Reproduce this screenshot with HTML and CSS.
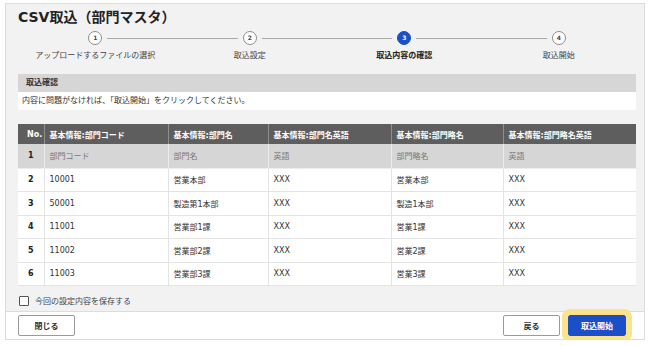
FILE: index.html
```html
<!DOCTYPE html>
<html lang="ja">
<head>
<meta charset="UTF-8" />
<meta name="viewport" content="width=device-width, initial-scale=1" />
<title>CSV取込（部門マスタ）</title>
<link rel="stylesheet" href="styles.css">
</head>
<body>

<div class="dialog" role="dialog" aria-label="CSV取込（部門マスタ）">
  <div class="dialog-body">
    <h1>CSV取込（部門マスタ）</h1>

    <!-- Wizard steps -->
    <ol class="steps">
      <li class="step"><span class="step-num">1</span><span class="step-label">アップロードするファイルの選択</span></li>
      <li class="step"><span class="step-num">2</span><span class="step-label">取込設定</span></li>
      <li class="step current"><span class="step-num">3</span><span class="step-label">取込内容の確認</span></li>
      <li class="step"><span class="step-num">4</span><span class="step-label">取込開始</span></li>
    </ol>

    <div class="notice">
      <div class="notice-head">取込確認</div>
      <p class="notice-text">内容に問題がなければ、「取込開始」をクリックしてください。</p>
    </div>

    <table class="preview">
      <colgroup>
        <col class="c-no">
        <col class="c-code">
        <col class="c-name">
        <col class="c-en">
        <col class="c-short">
        <col class="c-short-en">
      </colgroup>
      <thead>
        <tr>
          <th>No.</th>
          <th>基本情報:部門コード</th>
          <th>基本情報:部門名</th>
          <th>基本情報:部門名英語</th>
          <th>基本情報:部門略名</th>
          <th>基本情報:部門略名英語</th>
        </tr>
      </thead>
      <tbody>
        <tr class="label-row">
          <td class="no">1</td><td>部門コード</td><td>部門名</td><td>英語</td><td>部門略名</td><td>英語</td>
        </tr>
        <tr>
          <td class="no">2</td><td>10001</td><td>営業本部</td><td>XXX</td><td>営業本部</td><td>XXX</td>
        </tr>
        <tr>
          <td class="no">3</td><td>50001</td><td>製造第1本部</td><td>XXX</td><td>製造1本部</td><td>XXX</td>
        </tr>
        <tr>
          <td class="no">4</td><td>11001</td><td>営業部1課</td><td>XXX</td><td>営業1課</td><td>XXX</td>
        </tr>
        <tr>
          <td class="no">5</td><td>11002</td><td>営業部2課</td><td>XXX</td><td>営業2課</td><td>XXX</td>
        </tr>
        <tr>
          <td class="no">6</td><td>11003</td><td>営業部3課</td><td>XXX</td><td>営業3課</td><td>XXX</td>
        </tr>
      </tbody>
    </table>

    <label class="save-option"><input type="checkbox" /><span>今回の設定内容を保存する</span></label>
  </div>

  <div class="dialog-foot">
    <button class="btn">閉じる</button>
    <div class="foot-right">
      <button class="btn">戻る</button>
      <button class="btn btn-primary">取込開始</button>
    </div>
  </div>
</div>

</body>
</html>
```

FILE: styles.css
```css
* {
  box-sizing: border-box;
}
body {
  font-family: 'DejaVu Sans', 'Noto Sans CJK JP', sans-serif;
  font-size: 8px;
  margin: 0;
  background: #fff;
  color: #333;
}

/* Dialog frame */
.dialog {
  margin: 3px 3px 0 5px;
  width: 640px;
  height: 337px;
  border: 1px solid #dcdcdc;
  background: #f2f2f2;
  display: flex;
  flex-direction: column;
}
.dialog-body {
  flex: 1;
  padding: 0 8px 0 12px;
}
h1 {
  margin: 3px 0 0;
  font-size: 14px;
  font-weight: 700;
  color: #222;
  line-height: 20px;
}

/* Wizard steps */
.steps {
  list-style: none;
  margin: 4px 0 0;
  padding: 0;
  display: flex;
}
.step {
  flex: 1;
  position: relative;
  display: flex;
  flex-direction: column;
  align-items: center;
  gap: 5px;
  color: #444;
}
.step + .step::before {
  content: '';
  position: absolute;
  top: 7px;
  left: calc(-50% + 12px);
  right: calc(50% + 12px);
  height: 1px;
  background: #a8a8a8;
}
.step-num {
  width: 14px;
  height: 14px;
  border-radius: 50%;
  border: 1px solid #8c8c8c;
  background: #fff;
  font-size: 6px;
  font-weight: 700;
  line-height: 12px;
  text-align: center;
  color: #444;
}
.step-label {
  line-height: 12px;
}
.step.current .step-num {
  background: #1a4fc7;
  border-color: #1a4fc7;
  color: #fff;
}
.step.current .step-label {
  font-weight: 700;
  color: #222;
}

/* Confirm notice */
.notice {
  margin-top: 12px;
}
.notice-head {
  background: #d6d6d6;
  height: 18px;
  line-height: 18px;
  padding-left: 8px;
  font-weight: 700;
  color: #333;
}
.notice-text {
  margin: 0;
  background: #fff;
  height: 18px;
  line-height: 18px;
  padding-left: 4px;
}

/* Preview table */
.preview {
  margin-top: 14px;
  width: 618px;
  border-collapse: collapse;
  table-layout: fixed;
}
.c-no { width: 26px; }
.c-code { width: 124px; }
.c-name { width: 100px; }
.c-en { width: 123px; }
.c-short { width: 112px; }
.c-short-en { width: 133px; }
.preview th {
  background: #5e5e5e;
  color: #fff;
  font-weight: 700;
  text-align: left;
  height: 20px;
  padding: 0 5px;
  border-left: 1px solid #8e8e8e;
}
.preview th:first-child {
  border-left: none;
  padding-left: 9px;
}
.preview td {
  background: #fff;
  height: 23.5px;
  padding: 0 5px;
  border: 1px solid #e4e4e4;
  border-top: none;
}
.preview td:first-child {
  border-left: none;
}
.preview td:last-child {
  border-right: none;
}
.preview td.no {
  font-weight: 700;
  padding-left: 10px;
  color: #222;
}
.preview .label-row td {
  background: #d6d6d6;
  color: #777;
  border-color: #ececec;
  height: 24px;
}
.preview .label-row td.no {
  color: #222;
}

/* Save option */
.save-option {
  display: flex;
  align-items: center;
  gap: 6px;
  margin-top: 9px;
  color: #444;
}
.save-option input {
  appearance: none;
  margin: 0 0 0 1px;
  width: 10px;
  height: 10px;
  border: 1px solid #555;
  border-radius: 1px;
  background: #fff;
}

/* Footer */
.dialog-foot {
  height: 28px;
  background: #fff;
  border-top: 1px solid #dcdcdc;
  display: flex;
  align-items: center;
  justify-content: space-between;
  padding: 0 18px 0 12px;
}
.foot-right {
  display: flex;
  gap: 8px;
}
.btn {
  font-family: inherit;
  font-size: 8px;
  font-weight: 700;
  width: 57px;
  height: 21px;
  background: #fff;
  border: 1px solid #9a9a9a;
  border-radius: 2px;
  color: #333;
  cursor: pointer;
}
.btn-primary {
  width: 58px;
  background: #1a4fc7;
  border-color: #1a4fc7;
  color: #fff;
  outline: 6px solid #fae38c;
  outline-offset: 0;
}
```
